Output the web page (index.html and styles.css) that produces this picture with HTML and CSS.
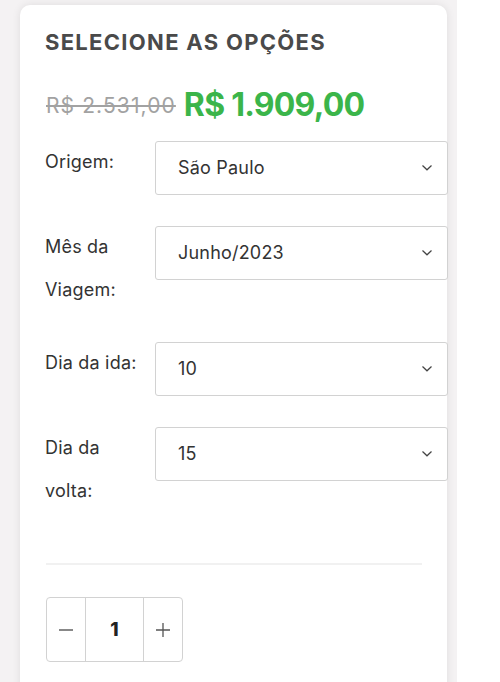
FILE: index.html
```html
<!DOCTYPE html>
<html lang="pt-BR">
<head>
<meta charset="utf-8">
<title>Selecione as opções</title>
<link rel="stylesheet" href="styles.css">
</head>
<body>
<div class="page">
  <div class="card">
    <h2 class="title">SELECIONE AS OPÇÕES</h2>
    <div class="price">
      <del class="price-old">R$ 2.531,00</del>
      <span class="price-new">R$ 1.909,00</span>
    </div>
    <div class="options">
      <div class="row">
        <label class="label">Origem:</label>
        <div class="select"><span class="select-value">São Paulo</span><svg class="chev" width="12" height="8" viewBox="0 0 12 8"><path d="M1.5 1.5 L6 5.8 L10.5 1.5" fill="none" stroke="#444" stroke-width="1.2"/></svg></div>
      </div>
      <div class="row">
        <label class="label">Mês da Viagem:</label>
        <div class="select"><span class="select-value">Junho/2023</span><svg class="chev" width="12" height="8" viewBox="0 0 12 8"><path d="M1.5 1.5 L6 5.8 L10.5 1.5" fill="none" stroke="#444" stroke-width="1.2"/></svg></div>
      </div>
      <div class="row">
        <label class="label">Dia da ida:</label>
        <div class="select"><span class="select-value">10</span><svg class="chev" width="12" height="8" viewBox="0 0 12 8"><path d="M1.5 1.5 L6 5.8 L10.5 1.5" fill="none" stroke="#444" stroke-width="1.2"/></svg></div>
      </div>
      <div class="row">
        <label class="label">Dia da volta:</label>
        <div class="select"><span class="select-value">15</span><svg class="chev" width="12" height="8" viewBox="0 0 12 8"><path d="M1.5 1.5 L6 5.8 L10.5 1.5" fill="none" stroke="#444" stroke-width="1.2"/></svg></div>
      </div>
    </div>
    <div class="divider"></div>
    <div class="qty">
      <div class="qty-btn"><svg width="14" height="14" viewBox="0 0 14 14"><path d="M0 7 H14" stroke="#555" stroke-width="1.4"/></svg></div>
      <div class="qty-value">1</div>
      <div class="qty-btn"><svg width="14" height="14" viewBox="0 0 14 14"><path d="M0 7 H14 M7 0 V14" stroke="#555" stroke-width="1.3"/></svg></div>
    </div>
  </div>
</div>
</body>
</html>
```

FILE: styles.css
```css
html, body {
  margin: 0;
  padding: 0;
  background: #ffffff;
  font-family: "Inter", "Open Sans", sans-serif;
}

.page {
  width: 457px;
  height: 682px;
  overflow: hidden;
  box-sizing: border-box;
  background: #f4f2f3;
  padding: 5px 10px 0 20px;
}

.card {
  background: #ffffff;
  border-radius: 10px;
  box-shadow: 0 0 8px rgba(0, 0, 0, 0.09);
  padding: 26px 25px 40px 25px;
  min-height: 700px;
}

.title {
  margin: 0;
  font-size: 22px;
  line-height: 22px;
  font-weight: 700;
  letter-spacing: 1.3px;
  color: #4a4a4a;
}

.price {
  margin-top: 36px;
  display: flex;
  align-items: center;
  gap: 8px;
  height: 32px;
}

.price-old {
  font-size: 21px;
  line-height: 21px;
  color: #a2a2a2;
  letter-spacing: 1.1px;
  text-decoration: line-through;
  text-decoration-thickness: 2px;
  margin-left: 1px;
}

.price-new {
  font-size: 32px;
  line-height: 32px;
  font-weight: 700;
  color: #3bb54a;
  letter-spacing: -0.75px;
}

.options {
  margin-top: 20px;
  margin-right: -26px;
  display: flex;
  flex-direction: column;
  gap: 31px;
}

.row {
  display: flex;
  align-items: flex-start;
}

.label {
  width: 102px;
  padding-right: 8px;
  font-size: 18px;
  line-height: 42.5px;
  color: #333333;
  letter-spacing: 0.2px;
}

.select {
  flex: 1;
  height: 54px;
  box-sizing: border-box;
  border: 1px solid #d2d2d2;
  border-radius: 3px;
  display: flex;
  align-items: center;
  justify-content: space-between;
  padding: 0 14px 0 22px;
  font-size: 18px;
  color: #333333;
  letter-spacing: 0.2px;
}

.select-value {
  line-height: 1;
}

.divider {
  margin-top: 51px;
  height: 2px;
  background: #f1f1f1;
  margin-left: 1px;
}

.qty {
  margin-top: 32px;
  margin-left: 1px;
  display: inline-flex;
  height: 65px;
  box-sizing: border-box;
  border: 1px solid #d2d2d2;
  border-radius: 4px;
}

.qty-btn {
  width: 38px;
  display: flex;
  align-items: center;
  justify-content: center;
}

.qty-value {
  width: 57px;
  border-left: 1px solid #d2d2d2;
  border-right: 1px solid #d2d2d2;
  display: flex;
  align-items: center;
  justify-content: center;
  font-size: 19px;
  font-weight: 800;
  color: #222222;
}
```
